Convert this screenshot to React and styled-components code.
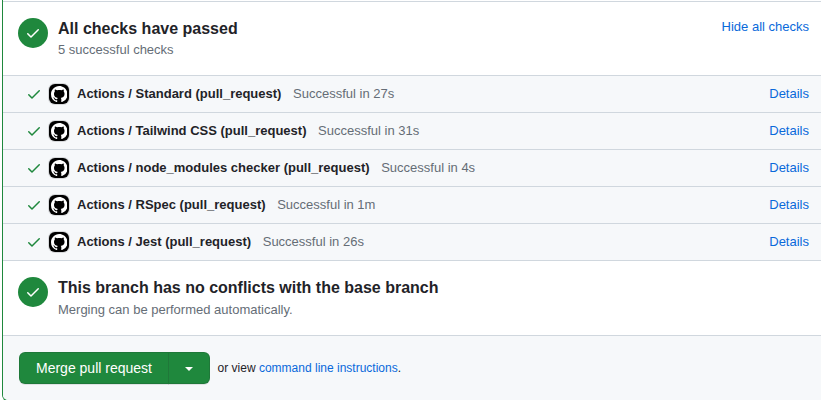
import React from 'react';
import styled, { createGlobalStyle } from 'styled-components';

const GlobalStyle = createGlobalStyle`
  body {
    margin: 0;
    background: #fff;
    overflow: hidden;
    color: #1f2328;
    font: 13px/20px "Liberation Sans", Arial, sans-serif;
  }
`;

const MergeBox = styled.main`
  box-sizing: border-box;
  height: 401px;
  margin-left: 2px;
  border-left: 1px solid #1f883d;
  border-bottom: 1px solid #1f883d;
  border-bottom-left-radius: 6px;
  overflow: hidden;
`;

const TopRule = styled.div`
  box-sizing: border-box;
  height: 2px;
  border-bottom: 1px solid #d0d7de;
`;

const StatusSection = styled.section`
  display: flex;
  box-sizing: border-box;
  height: ${(p) => p.$height}px;
  padding: 16px 12px 0 15px;
  border-bottom: 1px solid #d0d7de;
  background: #fff;
`;

const StatusCircle = styled.span`
  display: flex;
  align-items: center;
  justify-content: center;
  width: 30px;
  height: 30px;
  margin-right: 10px;
  border-radius: 50%;
  background: #1f883d;
  color: #fff;
`;

const StatusText = styled.div`
  flex: 1;
`;

const Heading = styled.h3`
  margin: 0;
  font-size: 16px;
  line-height: 21px;
  font-weight: 700;
`;

const Note = styled.p`
  margin: ${(p) => p.$gap || 0}px 0 0;
  color: #656d76;
  line-height: 21px;
`;

const Link = styled.a`
  color: #0969da;
  text-decoration: none;
`;

const ToggleLink = styled(Link)`
  margin-top: -1px;
`;

const CheckRow = styled.div`
  display: flex;
  align-items: center;
  box-sizing: border-box;
  height: 37px;
  padding: 0 12px 0 23px;
  border-bottom: 1px solid #d0d7de;
  background: #f6f8fa;
`;

const CheckMark = styled.span`
  display: flex;
  margin: 0 7px 0 0;
  color: #1f883d;
`;

const Avatar = styled.span`
  display: flex;
  align-items: center;
  justify-content: center;
  width: 20px;
  height: 20px;
  margin-right: 8px;
  border-radius: 6px;
  background: #000;
  box-shadow: 0 0 0 1px rgba(31, 35, 40, 0.15);
  color: #fff;
`;

const CheckName = styled.strong`
  margin-right: 11.6px;
`;

const Duration = styled.span`
  flex: 1;
  color: #656d76;
`;

const Footer = styled.footer`
  display: flex;
  align-items: flex-start;
  box-sizing: border-box;
  height: 64px;
  padding: 16px;
  background: #f6f8fa;
  font-size: 12px;
`;

const ButtonGroup = styled.div`
  display: flex;
  margin-right: 7.6px;
`;

const GreenButton = styled.button`
  box-sizing: border-box;
  height: 32px;
  margin: 0;
  border: 1px solid rgba(31, 35, 40, 0.15);
  background: #1f883d;
  color: #fff;
  box-shadow: 0 1px 0 rgba(31, 35, 40, 0.1);
`;

const MergeButton = styled(GreenButton)`
  width: 150px;
  padding: 0 0 0 16px;
  border-right-width: 0;
  border-radius: 6px 0 0 6px;
  font: 14px/20px "Liberation Sans", Arial, sans-serif;
  text-align: left;
  white-space: nowrap;
`;

const MenuButton = styled(GreenButton)`
  display: flex;
  align-items: center;
  justify-content: center;
  width: 42px;
  margin-left: -1px;
  padding: 0;
  border-radius: 0 6px 6px 0;
`;

const Caret = styled.span`
  margin-top: 2px;
  border: 4px solid transparent;
  border-top-color: #fff;
  border-bottom: 0;
`;

const Instructions = styled.span`
  line-height: 32px;
`;

const CheckIcon = () => (
  <svg width="16" height="16" viewBox="0 0 16 16" fill="currentColor" aria-hidden="true">
    <path d="M13.78 4.22a.75.75 0 0 1 0 1.06l-7.25 7.25a.75.75 0 0 1-1.06 0L2.22 9.28a.751.751 0 0 1 .018-1.042.751.751 0 0 1 1.042-.018L6 10.94l6.72-6.72a.75.75 0 0 1 1.06 0Z" />
  </svg>
);

const GitHubIcon = () => (
  <svg width="16.5" height="16.5" viewBox="0 0 16 16" fill="currentColor" aria-hidden="true">
    <path d="M8 0c4.42 0 8 3.58 8 8a8.013 8.013 0 0 1-5.45 7.59c-.4.08-.55-.17-.55-.38 0-.27.01-1.13.01-2.2 0-.75-.25-1.23-.54-1.48 1.78-.2 3.65-.88 3.65-3.95 0-.88-.31-1.59-.82-2.15.08-.2.36-1.02-.08-2.12 0 0-.67-.22-2.2.82-.64-.18-1.32-.27-2-.27-.68 0-1.36.09-2 .27-1.53-1.03-2.2-.82-2.2-.82-.44 1.1-.16 1.92-.08 2.12-.51.56-.82 1.28-.82 2.15 0 3.06 1.86 3.75 3.64 3.95-.23.2-.44.55-.51 1.07-.46.21-1.61.55-2.33-.66-.15-.24-.6-.83-1.23-.82-.67.01-.27.38.01.53.34.19.73.9.82 1.13.16.45.68 1.31 2.69.94 0 .67.01 1.3.01 1.49 0 .21-.15.45-.55.38A7.995 7.995 0 0 1 0 8c0-4.42 3.58-8 8-8Z" />
  </svg>
);

const checks = [
  ['Standard', '27s'],
  ['Tailwind CSS', '31s'],
  ['node_modules checker', '4s'],
  ['RSpec', '1m'],
  ['Jest', '26s'],
];

export default function App() {
  return (
    <>
      <GlobalStyle />
      <MergeBox>
        <TopRule />
        <StatusSection $height={74}>
          <StatusCircle><CheckIcon /></StatusCircle>
          <StatusText>
            <Heading>All checks have passed</Heading>
            <Note>5 successful checks</Note>
          </StatusText>
          <ToggleLink>Hide all checks</ToggleLink>
        </StatusSection>
        {checks.map(([name, time]) => (
          <CheckRow key={name}>
            <CheckMark><CheckIcon /></CheckMark>
            <Avatar><GitHubIcon /></Avatar>
            <CheckName>Actions / {name} (pull_request)</CheckName>
            <Duration>Successful in {time}</Duration>
            <Link>Details</Link>
          </CheckRow>
        ))}
        <StatusSection $height={75}>
          <StatusCircle><CheckIcon /></StatusCircle>
          <StatusText>
            <Heading>This branch has no conflicts with the base branch</Heading>
            <Note $gap={1}>Merging can be performed automatically.</Note>
          </StatusText>
        </StatusSection>
        <Footer>
          <ButtonGroup>
            <MergeButton>Merge pull request</MergeButton>
            <MenuButton aria-label="Select merge method"><Caret /></MenuButton>
          </ButtonGroup>
          <Instructions>or view <Link>command line instructions</Link>.</Instructions>
        </Footer>
      </MergeBox>
    </>
  );
}
